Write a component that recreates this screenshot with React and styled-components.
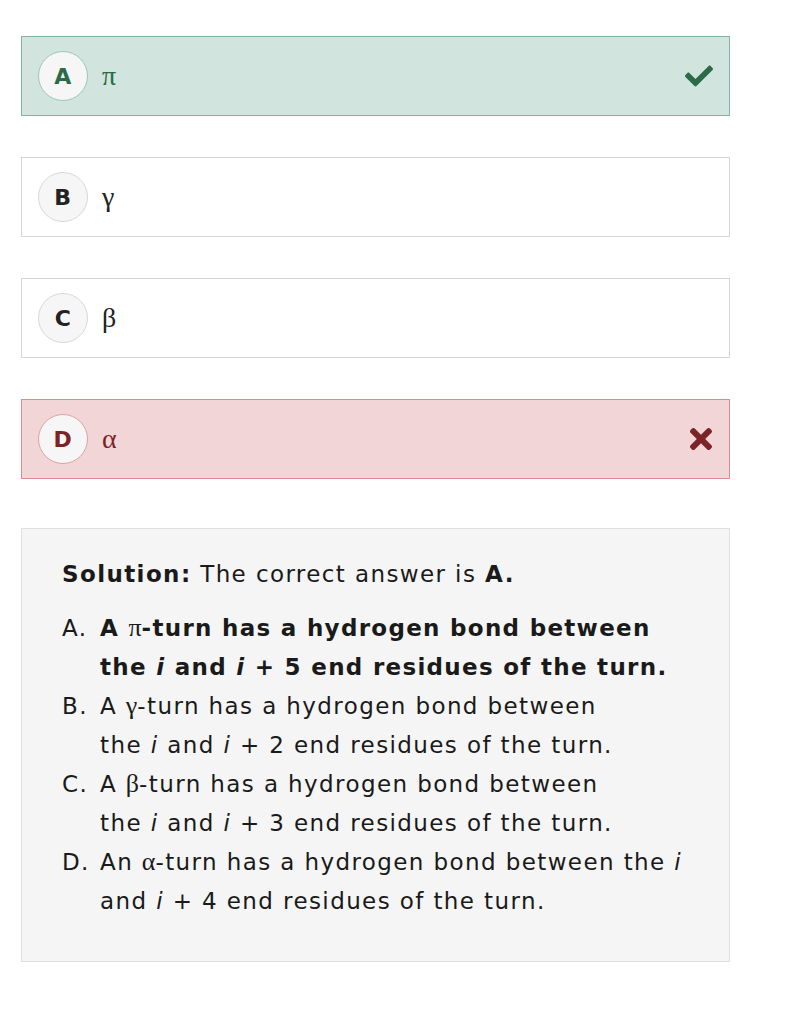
import React from "react";
import styled, { createGlobalStyle, css } from "styled-components";
import { FaCheck, FaTimes } from "react-icons/fa";

const GlobalStyle = createGlobalStyle`
  body {
    margin: 0;
    background: #ffffff;
    font-family: "DejaVu Sans", Verdana, sans-serif;
    color: #1a1a1a;
  }
`;

const tones = {
  correct: {
    bg: "#d1e5de",
    border: "#82b6a1",
    text: "#2b6b47",
    circle: "#9cc7b5",
  },
  wrong: {
    bg: "#f2d5d7",
    border: "#dc8c90",
    text: "#7c2327",
    circle: "#e0a0a3",
  },
  plain: {
    bg: "#ffffff",
    border: "#d6d6d6",
    text: "#222222",
    circle: "#d8d8d8",
  },
};

const options = [
  { key: "A", symbol: "π", tone: "correct" },
  { key: "B", symbol: "γ", tone: "plain" },
  { key: "C", symbol: "β", tone: "plain" },
  { key: "D", symbol: "α", tone: "wrong" },
];

const App = () => {
  return (
    <>
      <GlobalStyle />
      <Page>
        <OptionList>
          {options.map((o) => (
            <Option key={o.key} $tone={o.tone}>
              <Badge $tone={o.tone}>{o.key}</Badge>
              <Symbol $tone={o.tone}>{o.symbol}</Symbol>
              <Mark $tone={o.tone}>
                {o.tone === "correct" && <FaCheck />}
                {o.tone === "wrong" && <FaTimes />}
              </Mark>
            </Option>
          ))}
        </OptionList>
        <Solution>
          <Heading>
            <strong>Solution:</strong> The correct answer is <strong>A.</strong>
          </Heading>
          <Explain>
            <Item>
              <Letter>A.</Letter>
              <Body $bold>
                A <Greek>π</Greek>-turn has a hydrogen bond between
                <br />
                the <i>i</i> and <i>i</i> + 5 end residues of the turn.
              </Body>
            </Item>
            <Item>
              <Letter>B.</Letter>
              <Body>
                A <Greek>γ</Greek>-turn has a hydrogen bond between
                <br />
                the <i>i</i> and <i>i</i> + 2 end residues of the turn.
              </Body>
            </Item>
            <Item>
              <Letter>C.</Letter>
              <Body>
                A <Greek>β</Greek>-turn has a hydrogen bond between
                <br />
                the <i>i</i> and <i>i</i> + 3 end residues of the turn.
              </Body>
            </Item>
            <Item>
              <Letter>D.</Letter>
              <Body>
                An <Greek>α</Greek>-turn has a hydrogen bond between the <i>i</i>
                <br />
                and <i>i</i> + 4 end residues of the turn.
              </Body>
            </Item>
          </Explain>
        </Solution>
      </Page>
    </>
  );
};

const Page = styled.div`
  width: 709px;
  padding: 36px 0 60px 21px;
`;

const OptionList = styled.div`
  display: flex;
  flex-direction: column;
  gap: 41px;
`;

const Option = styled.div`
  box-sizing: border-box;
  height: 80px;
  display: flex;
  align-items: center;
  padding: 0 16px;
  border: 1px solid ${(p) => tones[p.$tone].border};
  background: ${(p) => tones[p.$tone].bg};
`;

const Badge = styled.div`
  box-sizing: border-box;
  width: 50px;
  height: 50px;
  border-radius: 50%;
  background: #f6f6f6;
  border: 1px solid ${(p) => tones[p.$tone].circle};
  display: flex;
  align-items: center;
  justify-content: center;
  font-weight: bold;
  font-size: 22px;
  letter-spacing: 0.5px;
  color: ${(p) => tones[p.$tone].text};
`;

const Symbol = styled.span`
  margin-left: 14px;
  font-family: "Liberation Serif", "Times New Roman", serif;
  font-size: 28px;
  color: ${(p) => tones[p.$tone].text};
`;

const Mark = styled.span`
  margin-left: auto;
  display: flex;
  align-items: center;
  font-size: 28px;
  margin-right: 0;
  color: ${(p) => tones[p.$tone].text};
  ${(p) =>
    p.$tone === "wrong" &&
    css`
      font-size: 32px;
      margin-right: -4px;
    `}
`;

const Solution = styled.div`
  box-sizing: border-box;
  margin-top: 49px;
  height: 434px;
  background: #f5f5f5;
  border: 1px solid #e0e0e0;
  padding: 26px 40px;
  font-size: 23px;
  letter-spacing: 1.4px;
`;

const Heading = styled.p`
  margin: 0 0 15px 0;
  line-height: 39px;
`;

const Explain = styled.div`
  display: flex;
  flex-direction: column;
`;

const Item = styled.div`
  display: flex;
  line-height: 39px;
`;

const Letter = styled.span`
  width: 38px;
  flex: none;
`;

const Body = styled.span`
  font-weight: ${(p) => (p.$bold ? "bold" : "normal")};
  letter-spacing: ${(p) => (p.$bold ? "1.3px" : "1.4px")};
`;

const Greek = styled.span`
  font-family: "Liberation Serif", "Times New Roman", serif;
  font-size: 26px;
  line-height: 0;
  font-weight: normal;
  letter-spacing: 0;
`;

export default App;
